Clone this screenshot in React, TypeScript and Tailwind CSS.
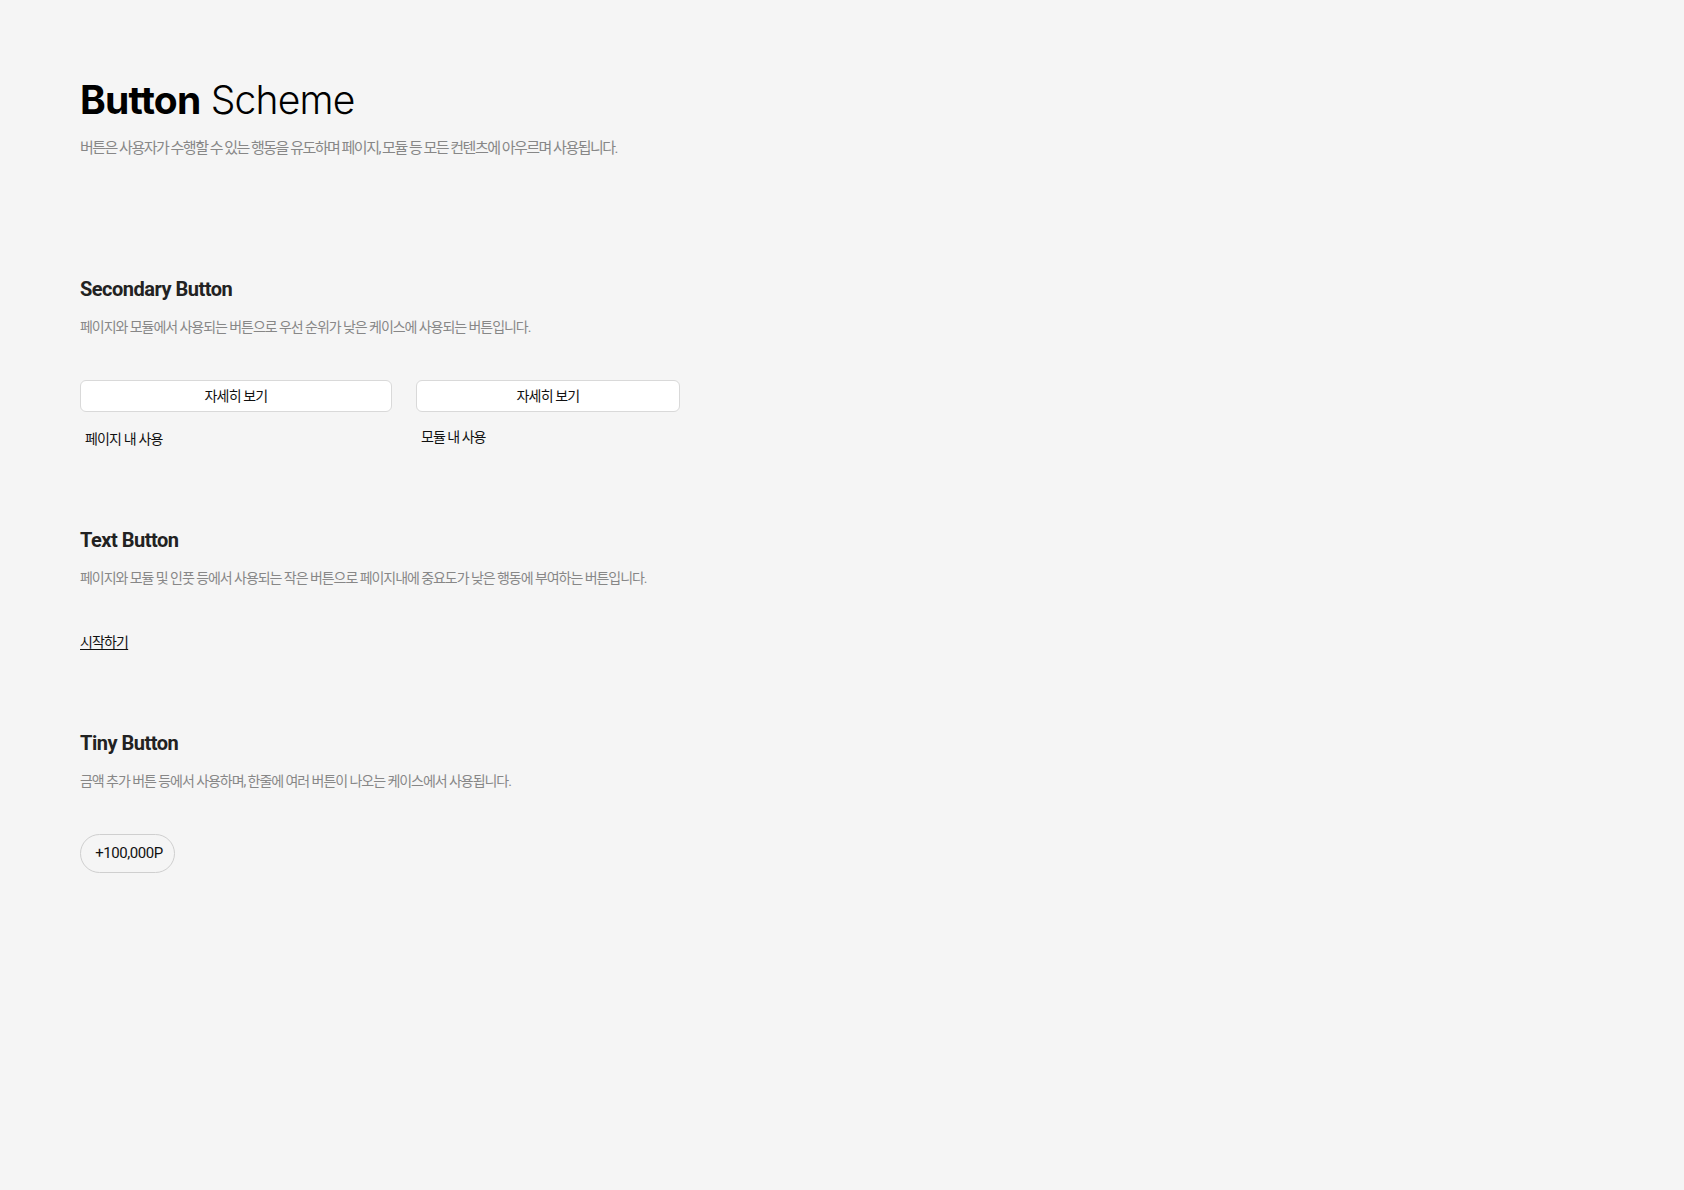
const ko = "font-['Roboto','Noto_Sans_CJK_KR',sans-serif]";

function Section({ title, desc, children }: { title: string; desc: string; children: React.ReactNode }) {
  return (
    <section>
      <h2 className="text-[20px] leading-7 font-bold tracking-[-0.025em] text-[#222]">{title}</h2>
      <p className="mt-[14px] text-[14px] leading-5 tracking-[-0.075em] text-[#878787]">{desc}</p>
      {children}
    </section>
  );
}

export default function App() {
  return (
    <div className={`min-h-screen bg-[#f5f5f5] pl-20 pt-[76px] pb-20 ${ko}`}>
      <h1 className="font-['Inter',sans-serif] text-[39px] leading-[48px] tracking-[-0.02em] text-black">
        <span className="font-bold">Button</span> <span className="font-light">Scheme</span>
      </h1>
      <p className="mt-[13px] text-[15px] leading-[22px] tracking-[-0.1em] text-[#878787]">
        버튼은 사용자가 수행할 수 있는 행동을 유도하며 페이지, 모듈 등 모든 컨텐츠에 아우르며 사용됩니다.
      </p>

      <div className="mt-[116px]">
        <Section
          title="Secondary Button"
          desc="페이지와 모듈에서 사용되는 버튼으로 우선 순위가 낮은 케이스에 사용되는 버튼입니다."
        >
          <div className="mt-[43px] flex gap-6">
            <div className="w-[312px]">
              <button className="h-8 w-full rounded-md border border-[#d9d9d9] bg-white text-[14px] tracking-[-0.06em] text-[#111]">
                자세히 보기
              </button>
              <p className="mt-[17px] pl-[5px] text-[14px] leading-5 tracking-[-0.06em] text-[#111]">페이지 내 사용</p>
            </div>
            <div className="w-[264px]">
              <button className="h-8 w-full rounded-md border border-[#d9d9d9] bg-white text-[14px] tracking-[-0.06em] text-[#111]">
                자세히 보기
              </button>
              <p className="mt-[15px] pl-[5px] text-[14px] leading-5 tracking-[-0.07em] text-[#111]">모듈 내 사용</p>
            </div>
          </div>
        </Section>
      </div>

      <div className="mt-[77px]">
        <Section
          title="Text Button"
          desc="페이지와 모듈 및 인풋 등에서 사용되는 작은 버튼으로 페이지내에 중요도가 낮은 행동에 부여하는 버튼입니다."
        >
          <button className="mt-[44px] block text-[14px] leading-5 tracking-[-0.06em] text-[#111] underline underline-offset-2">
            시작하기
          </button>
        </Section>
      </div>

      <div className="mt-[77px]">
        <Section
          title="Tiny Button"
          desc="금액 추가 버튼 등에서 사용하며, 한줄에 여러 버튼이 나오는 케이스에서 사용됩니다."
        >
          <button className="mt-[43px] flex h-[39px] w-[95px] items-center justify-center rounded-full border border-[#cfcfcf] pl-[3px] text-[15px] tracking-[-0.03em] text-[#111]">
            +100,000P
          </button>
        </Section>
      </div>
    </div>
  );
}
